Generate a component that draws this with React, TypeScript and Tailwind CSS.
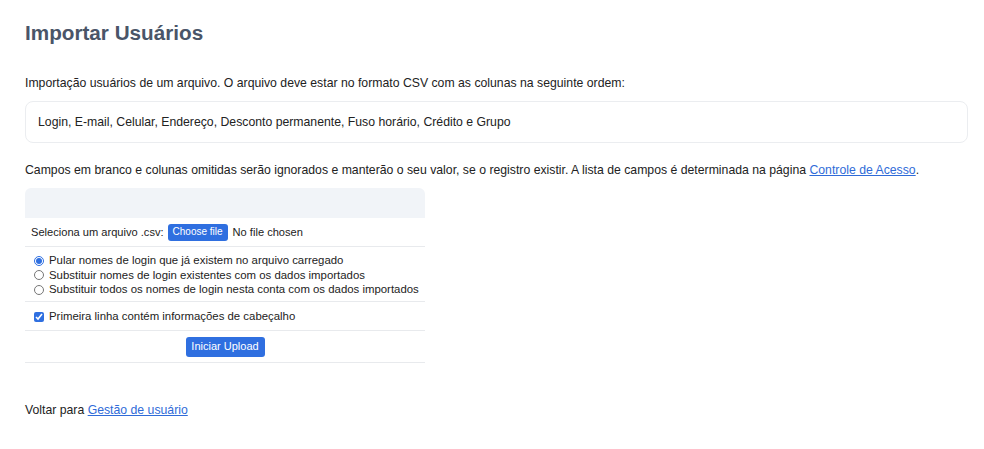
import React from "react";

const options = [
  "Pular nomes de login que já existem no arquivo carregado",
  "Substituir nomes de login existentes com os dados importados",
  "Substituir todos os nomes de login nesta conta com os dados importados",
];

export default function App() {
  return (
    <div className="min-h-screen bg-white px-[25px] pt-[19px] font-['Liberation_Sans',Arial,sans-serif] text-[#222]">
      <h1 className="text-[20.7px] leading-[28px] font-bold text-[#4a5568]">
        Importar Usuários
      </h1>

      <p className="mt-[27px] text-[12.25px] leading-[18px]">
        Importação usuários de um arquivo. O arquivo deve estar no formato CSV com as colunas na
        seguinte ordem:
      </p>

      <div className="mt-[9px] flex h-[42px] w-[943px] items-center rounded-lg border border-[#ebedf0] px-3 text-[12.25px]">
        Login, E-mail, Celular, Endereço, Desconto permanente, Fuso horário, Crédito e Grupo
      </div>

      <p className="mt-[18px] text-[12.25px] leading-[18px]">
        Campos em branco e colunas omitidas serão ignorados e manterão o seu valor, se o registro
        existir. A lista de campos é determinada na página{" "}
        <a href="#" className="text-[#2f6bd8] underline">
          Controle de Acesso
        </a>
        .
      </p>

      <div className="mt-[9px] w-[400px] text-[11.4px] leading-[14.5px]">
        <div className="h-[30px] rounded-t-md bg-[#f1f4f8]" />
        <div className="flex h-[29px] items-center border-b border-[#e8eaed] px-[6px] text-[11.1px]">
          <span>Seleciona um arquivo .csv:</span>
          <label className="ml-[4px] flex cursor-pointer items-center">
            <span className="flex h-[17px] items-center rounded-[3px] bg-[#2f6fe0] px-[5px] text-[10px] text-white">
              Choose file
            </span>
            <input type="file" accept=".csv" className="hidden" />
          </label>
          <span className="ml-[5px]">No file chosen</span>
        </div>
        <div className="flex h-[55px] flex-col justify-center border-b border-[#e8eaed] px-[9px] pt-[2px]">
          {options.map((o, i) => (
            <label key={o} className="flex items-center gap-[5px] whitespace-nowrap">
              <input
                type="radio"
                name="mode"
                defaultChecked={i === 0}
                className="m-0 h-[10px] w-[10px] shrink-0 accent-[#2f6fe0]"
              />
              <span>{o}</span>
            </label>
          ))}
        </div>
        <div className="flex h-[29px] items-center gap-[5px] border-b border-[#e8eaed] px-[9px] pt-[1px]">
          <input type="checkbox" defaultChecked className="m-0 h-[10px] w-[10px] shrink-0 accent-[#2f6fe0]" />
          <span>Primeira linha contém informações de cabeçalho</span>
        </div>
        <div className="flex h-[32px] items-center justify-center border-b border-[#e8eaed]">
          <button className="h-[20px] w-[79px] rounded-[3px] bg-[#2f6fe0] text-[11px] text-white">
            Iniciar Upload
          </button>
        </div>
      </div>

      <p className="mt-[38px] text-[12.25px] leading-[18px]">
        Voltar para{" "}
        <a href="#" className="text-[#2f6bd8] underline">
          Gestão de usuário
        </a>
      </p>
    </div>
  );
}
